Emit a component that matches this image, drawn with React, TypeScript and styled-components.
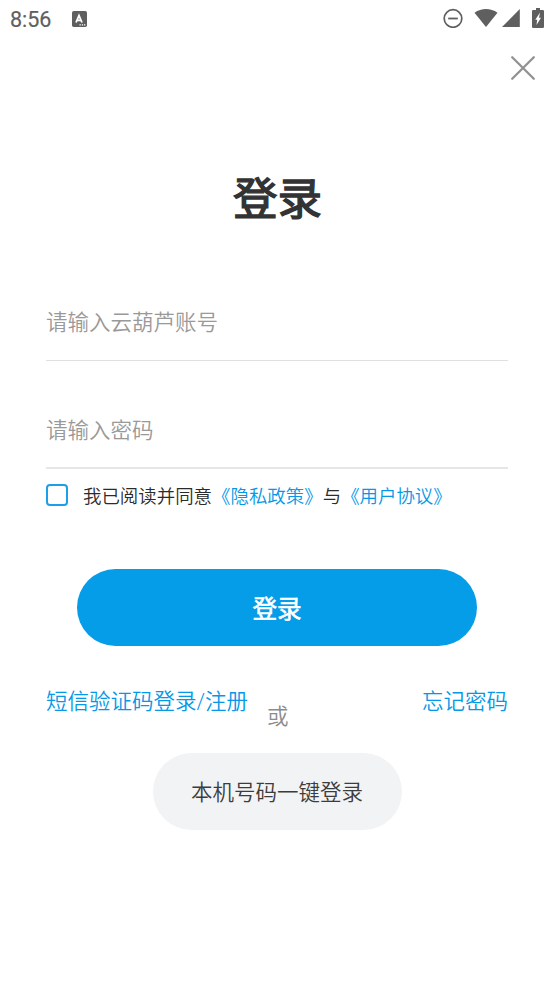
import React from 'react';
import styled, { createGlobalStyle } from 'styled-components';

const GlobalStyle = createGlobalStyle`
  * { box-sizing: border-box; }
  body {
    margin: 0;
    background: #fff;
    font-family: Roboto, "Noto Sans CJK SC", sans-serif;
  }
  button, input { font-family: inherit; margin: 0; padding: 0; border: 0; background: none; }
`;

const Screen = styled.div`
  width: 554px;
  height: 984px;
  overflow: hidden;
  display: flex;
  flex-direction: column;
  background: #fff;
`;

const StatusBar = styled.header`
  height: 38px;
  padding: 0 10px;
  display: flex;
  align-items: center;
  justify-content: space-between;
  color: #5f5f5f;
  svg { display: block; }
`;

const StatusGroup = styled.div`
  display: flex;
  align-items: center;
`;

const StatusIcons = styled(StatusGroup)`
  padding-bottom: 2px;
`;

const Clock = styled.span`
  width: 62px;
  font-size: 21.5px;
  line-height: 38px;
  -webkit-text-stroke: 0.2px #5f5f5f;
  padding-top: 1px;
`;

const TopBar = styled.div`
  height: 60px;
  padding: 17px 18px 0 0;
  display: flex;
  justify-content: flex-end;
  align-items: flex-start;
`;

const CloseButton = styled.button`
  width: 26px;
  height: 26px;
  svg { display: block; }
`;

const Title = styled.h1`
  margin: 69px 0 0;
  height: 66px;
  padding-left: 1px;
  line-height: 66px;
  font-size: 44.6px;
  font-weight: 400;
  -webkit-text-stroke: 1.3px #333;
  color: #333;
  text-align: center;
`;

const Form = styled.main`
  padding: 0 46px;
  display: flex;
  flex-direction: column;
`;

const Field = styled.input<{ $gap: number; $line: string }>`
  margin-top: ${(p) => p.$gap}px;
  width: 100%;
  height: 78px;
  padding-top: 2px;
  border-bottom: ${(p) => p.$line};
  font-size: 21.5px;
  font-weight: 350;
  outline: 0;
  &::placeholder { color: #999; opacity: 1; }
`;

const Agreement = styled.label`
  margin-top: 11px;
  height: 30px;
  display: flex;
  align-items: center;
  font-size: 18.46px;
  line-height: 30px;
  color: #2b2b2b;
  white-space: nowrap;
`;

const AgreementText = styled.span`
  padding-top: 3px;
  font-weight: 350;
`;

const Checkbox = styled.span`
  width: 22px;
  height: 22px;
  margin-right: 15px;
  border: 2px solid #1b9fe8;
  border-radius: 4px;
`;

const Link = styled.a`
  color: #0498e6;
`;

const PrimaryButton = styled.button`
  align-self: center;
  margin-top: 59px;
  width: 400px;
  height: 77px;
  padding-bottom: 2px;
  border-radius: 39px;
  background: #059ce8;
  color: #fff;
  font-size: 24.6px;
  font-weight: 400;
  -webkit-text-stroke: 0.6px #fff;
`;

const Options = styled.div`
  margin-top: 40px;
  height: 47px;
  display: grid;
  grid-template-columns: 221px 1fr auto;
  font-size: 21.5px;
  font-weight: 350;
  line-height: 32px;
  white-space: nowrap;
`;

const Or = styled.span`
  align-self: end;
  color: #8c8c8c;
`;

const SecondaryButton = styled.button`
  align-self: center;
  margin-top: 20px;
  width: 249px;
  height: 77px;
  padding-bottom: 2px;
  border-radius: 39px;
  background: #f2f3f5;
  color: #3c3c3c;
  font-size: 21.5px;
  font-weight: 350;
`;

const Spacer = styled.i<{ $w: number }>`
  width: ${(p) => p.$w}px;
`;

export default function App() {
  return (
    <Screen lang="zh-CN">
      <GlobalStyle />
      <StatusBar>
        <StatusGroup>
          <Clock>8:56</Clock>
          <svg width="15" height="16" viewBox="0 0 15 16">
            <rect width="15" height="16" rx="1.8" fill="#5f5f5f" />
            <path d="M4 11.5 7 4.6l3 6.9M5.2 9.3h3.7" fill="none" stroke="#fff" strokeWidth="1.8" />
            <path d="M7.5 13.9h1.3M9.8 13.9h1.3M12 13.9h1.3" stroke="#fff" strokeWidth="1.2" />
          </svg>
        </StatusGroup>
        <StatusIcons>
          <svg width="20" height="20" viewBox="0 0 20 20" fill="none" stroke="#5f5f5f">
            <circle cx="10" cy="10.5" r="8.8" strokeWidth="1.7" />
            <path d="M5.2 10.5h9.6" strokeWidth="1.8" />
          </svg>
          <Spacer $w={11} />
          <svg width="24" height="18" viewBox="0 0 24 18">
            <path d="M0.5 3.8C7.5-1.2 16.5-1.2 23.5 3.8L12 18z" fill="#5f5f5f" />
          </svg>
          <Spacer $w={4} />
          <svg width="18" height="18" viewBox="0 0 18 18">
            <path d="M17.8 0v18H0z" fill="#5f5f5f" />
          </svg>
          <Spacer $w={12} />
          <svg width="12" height="20" viewBox="0 0 12 20">
            <path d="M4 0h4v2h2.8Q12 2 12 3.2v15.6Q12 20 10.8 20H1.2Q0 20 0 18.8V3.2Q0 2 1.2 2H4z" fill="#5f5f5f" />
            <path d="M8 4.5 7 9.8h2L4.5 17l.7-5.2H3.3z" fill="#fff" />
          </svg>
        </StatusIcons>
      </StatusBar>
      <TopBar>
        <CloseButton aria-label="关闭">
          <svg width="26" height="26" viewBox="0 0 26 26">
            <path d="M2.2 2.2 23.8 23.8M23.8 2.2 2.2 23.8" stroke="#929292" strokeWidth="2.3" strokeLinecap="round" />
          </svg>
        </CloseButton>
      </TopBar>
      <Title>登录</Title>
      <Form>
        <Field $gap={50} $line="1px solid #e0e0e0" placeholder="请输入云葫芦账号" />
        <Field $gap={30} $line="2px solid #e6e6e6" placeholder="请输入密码" type="password" />
        <Agreement>
          <Checkbox />
          <AgreementText>我已阅读并同意<Link>《隐私政策》</Link>与<Link>《用户协议》</Link></AgreementText>
        </Agreement>
        <PrimaryButton>登录</PrimaryButton>
        <Options>
          <Link>短信验证码登录/注册</Link>
          <Or>或</Or>
          <Link>忘记密码</Link>
        </Options>
        <SecondaryButton>本机号码一键登录</SecondaryButton>
      </Form>
    </Screen>
  );
}
